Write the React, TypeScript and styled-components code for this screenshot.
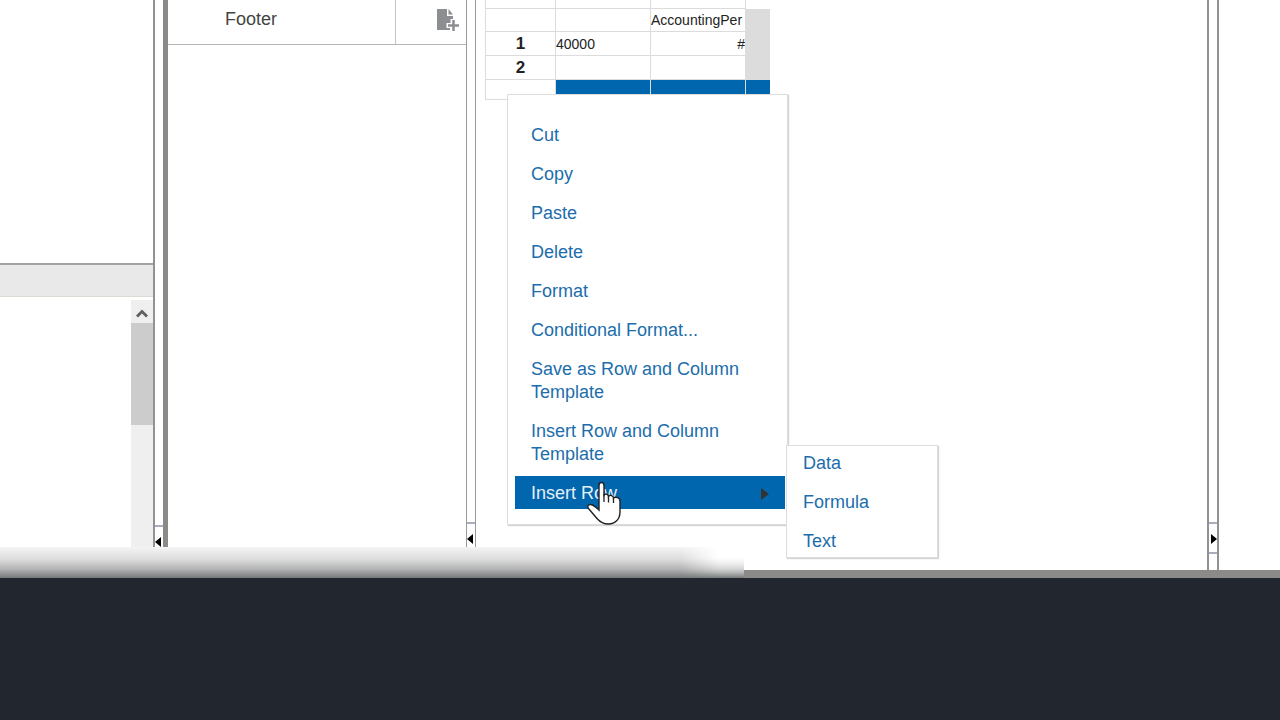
import React from "react";
import styled, { createGlobalStyle } from "styled-components";

const GlobalStyle = createGlobalStyle`
  *, *::before, *::after { box-sizing: border-box; }
  body {
    margin: 0;
    background: #ffffff;
    font-family: "Liberation Sans", Arial, sans-serif;
    font-size: 18px;
    line-height: 23px;
    color: #444444;
  }
  button { font: inherit; border: 0; background: none; padding: 0; cursor: pointer; }
`;

const Page = styled.div`
  min-height: 100vh;
  display: flex;
  flex-direction: column;
  overflow: hidden;
`;

const Workspace = styled.main`
  position: relative;
  flex: 1;
  display: flex;
  border-bottom: 8px solid #8b8a88;
`;

const Backdrop = styled.footer`
  height: 142px;
  background: #22262f;
`;

const LeftPanel = styled.aside`
  width: 155px;
  flex: none;
  display: flex;
  flex-direction: column;
  border-right: 2px solid #929292;
`;

const LeftTop = styled.div`
  height: 265px;
  border-bottom: 2px solid #a2a2a2;
`;

const LeftHeading = styled.div`
  height: 32px;
  background: #e9e9e9;
  border-bottom: 1px solid #dcdcd4;
`;

const LeftBody = styled.div`
  flex: 1;
  display: flex;
  justify-content: flex-end;
  padding-top: 3px;
`;

const Scrollbar = styled.div`
  width: 22px;
  display: flex;
  flex-direction: column;
  background: #efefef;
`;

const ScrollButton = styled.button`
  height: 23px;
  display: flex;
  align-items: center;
  justify-content: center;
  padding-top: 4px;
`;

const ScrollThumb = styled.div`
  height: 102px;
  background: #cccccc;
`;

const Splitter = styled.div<{ $edge?: number }>`
  flex: none;
  width: ${({ $edge = 0 }) => 8 + $edge}px;
  display: flex;
  flex-direction: column;
  justify-content: flex-end;
  border-right: ${({ $edge = 0 }) => $edge}px solid #8b8a86;
`;

const SplitterHandle = styled.button<{ $height: number; $closed?: boolean }>`
  height: ${({ $height }) => $height}px;
  display: flex;
  flex-direction: column;
  align-items: ${({ $closed }) => ($closed ? "flex-end" : "flex-start")};
  padding-top: 10px;
  border-top: 2px solid #a9afba;
  border-bottom: ${({ $closed }) => ($closed ? "2px solid #a9afba" : "0")};
  margin-bottom: ${({ $closed }) => ($closed ? "16px" : "0")};
`;

const Outline = styled.section`
  width: 299px;
  flex: none;
  border-right: 1px solid #999999;
`;

const OutlineRow = styled.div`
  height: 45px;
  display: flex;
  border-bottom: 1px solid #b4b4b4;
`;

const OutlineLabel = styled.div`
  flex: 1;
  padding: 8px 0 0 57px;
  border-right: 1px solid #c4c4c4;
`;

const OutlineAction = styled.button`
  width: 70px;
  display: flex;
  padding: 8px 0 0 41px;
`;

const Canvas = styled.section`
  position: relative;
  flex: 1;
  min-width: 0;
  padding-left: 9px;
  border-left: 1px solid #999999;
  border-right: 2px solid #929292;
`;

const Grid = styled.table`
  width: 285px;
  table-layout: fixed;
  border-spacing: 0;
  border-left: 1px solid #dcdcdc;
  font-size: 14px;
  line-height: 20px;
  color: #222222;
`;

const GridRow = styled.tr<{ $height: number }>`
  height: ${({ $height }) => $height}px;
`;

const Cell = styled.td<{ $fill?: string; $align?: string }>`
  padding: 0;
  overflow: hidden;
  white-space: nowrap;
  text-align: ${({ $align }) => $align ?? "left"};
  background: ${({ $fill }) => $fill ?? "transparent"};
  border-right: 1px solid #dcdcdc;
  border-bottom: 1px solid ${({ $fill }) => $fill ?? "#dcdcdc"};
`;

const RowHeading = styled.th`
  padding: 0;
  font-size: 17px;
  border-right: 1px solid #dcdcdc;
  border-bottom: 1px solid #dcdcdc;
`;

const GridTrack = styled.td<{ $fill?: string }>`
  padding: 0;
  background: ${({ $fill }) => $fill ?? "#dcdcdc"};
`;

const MenuSurface = styled.ul`
  position: absolute;
  margin: 0;
  list-style: none;
  display: flex;
  flex-direction: column;
  gap: 6px;
  background: #ffffff;
  border: 1px solid #dddddd;
  box-shadow: 1px 1px 1px #d4d4d4;
`;

const ContextMenu = styled(MenuSurface)`
  top: 94px;
  left: 31px;
  width: 281px;
  padding: 23px 2px 15px 7px;
`;

const Submenu = styled(MenuSurface)`
  top: -31px;
  left: 271px;
  width: 152px;
  padding: 0;
`;

const MenuEntry = styled.li`
  position: relative;
`;

const MenuButton = styled.button<{ $active?: boolean }>`
  width: 100%;
  display: flex;
  align-items: center;
  justify-content: space-between;
  padding: 6px 16px 4px;
  text-align: left;
  color: ${({ $active }) => ($active ? "#e4eff8" : "#1c6dab")};
  background: ${({ $active }) => ($active ? "#0066ae" : "transparent")};
`;

const Pointer = styled.svg`
  position: absolute;
  left: 71px;
  top: 5px;
  pointer-events: none;
`;

const Haze = styled.div`
  position: absolute;
  left: 0;
  top: 547px;
  bottom: -8px;
  width: 744px;
  background: linear-gradient(#f5f4f4, #dcdcdc 40%, #b2b3b3 72%, #74797a);
`;

const HazeFade = styled.div`
  margin-left: auto;
  width: 64px;
  height: 100%;
  background: linear-gradient(#ffffff 30%, rgba(255, 255, 255, 0));
  mask-image: linear-gradient(to right, transparent, #000000 60%);
`;

const RightPanel = styled.aside`
  flex: none;
  width: 63px;
  border-left: 2px solid #929292;
`;

const Arrow = ({ right = false }: { right?: boolean }) => (
  <svg width="6" height="10" viewBox="0 0 6 10" aria-hidden="true">
    <path d={right ? "M0 0L6 5L0 10Z" : "M6 0L0 5L6 10Z"} fill="#000000" />
  </svg>
);

const menuItems = [
  "Cut",
  "Copy",
  "Paste",
  "Delete",
  "Format",
  "Conditional Format...",
  "Save as Row and Column Template",
  "Insert Row and Column Template",
];

const rowTypes = ["Data", "Formula", "Text"];

export default function App() {
  return (
    <>
      <GlobalStyle />
      <Page>
        <Workspace>
          <LeftPanel>
            <LeftTop />
            <LeftHeading />
            <LeftBody>
              <Scrollbar>
                <ScrollButton aria-label="Scroll up">
                  <svg width="12" height="9" viewBox="0 0 12 9" aria-hidden="true">
                    <path d="M1 7.500L6 2.500L11 7.500" fill="none" stroke="#606060" strokeWidth="2.8" />
                  </svg>
                </ScrollButton>
                <ScrollThumb />
              </Scrollbar>
            </LeftBody>
          </LeftPanel>
          <Splitter $edge={5}>
            <SplitterHandle $height={45} aria-label="Collapse left panel">
              <Arrow />
            </SplitterHandle>
          </Splitter>
          <Outline>
            <OutlineRow>
              <OutlineLabel>Footer</OutlineLabel>
              <OutlineAction aria-label="Add footer item">
                <svg width="23" height="24" viewBox="0 0 23 24" aria-hidden="true">
                  <path
                    d="M0 1H10V8H16V11H13.500V15H9.500V20H13V22H0ZM11.500 1L16 6.500H11.500Z"
                    fill="#8d8e91"
                  />
                  <path d="M16.500 12V23M11 17.500H22" fill="none" stroke="#8d8e91" strokeWidth="2.500" />
                </svg>
              </OutlineAction>
            </OutlineRow>
          </Outline>
          <Splitter>
            <SplitterHandle $height={48} aria-label="Collapse outline">
              <Arrow />
            </SplitterHandle>
          </Splitter>
          <Canvas>
            <Grid>
              <colgroup>
                <col style={{ width: 70 }} />
                <col style={{ width: 95 }} />
                <col style={{ width: 95 }} />
                <col />
              </colgroup>
              <tbody>
                <GridRow $height={9}>
                  <RowHeading />
                  <Cell />
                  <Cell />
                  <GridTrack $fill="#ffffff" />
                </GridRow>
                <GridRow $height={23}>
                  <RowHeading />
                  <Cell />
                  <Cell>AccountingPer</Cell>
                  <GridTrack rowSpan={3} />
                </GridRow>
                <GridRow $height={24}>
                  <RowHeading scope="row">1</RowHeading>
                  <Cell>40000</Cell>
                  <Cell $align="right">#</Cell>
                </GridRow>
                <GridRow $height={24}>
                  <RowHeading scope="row">2</RowHeading>
                  <Cell />
                  <Cell />
                </GridRow>
                <GridRow $height={20}>
                  <RowHeading />
                  <Cell $fill="#0066ae" />
                  <Cell $fill="#0066ae" />
                  <GridTrack $fill="#0066ae" />
                </GridRow>
              </tbody>
            </Grid>
            <ContextMenu>
              {menuItems.map((label) => (
                <MenuEntry key={label}>
                  <MenuButton>{label}</MenuButton>
                </MenuEntry>
              ))}
              <MenuEntry>
                <MenuButton $active aria-haspopup="true" aria-expanded="true">
                  Insert Row
                  <svg width="8" height="12" viewBox="0 0 8 12" aria-hidden="true">
                    <path d="M0 0L8 6L0 12Z" fill="#333333" />
                  </svg>
                </MenuButton>
                <Submenu>
                  {rowTypes.map((label) => (
                    <MenuEntry key={label}>
                      <MenuButton>{label}</MenuButton>
                    </MenuEntry>
                  ))}
                </Submenu>
                <Pointer width="36" height="44" viewBox="0 0 36 44" aria-hidden="true">
                  <path
                    d="M13 4.500C13 .5 18 .5 18 4.500V14C19 12.500 22.500 13 22.500 15.500C24 13.500 27.500 14.500 27.500 17C29.500 15.500 34 16.500 34 20V31C34 38.500 29 43 22.500 43C17 43 14 41 11 37.500L2.500 27.500C.5 24.500 3.500 22.500 6.500 24C9.500 25.500 11.500 27.500 13 29Z"
                    fill="#ffffff"
                    stroke="#222222"
                    strokeWidth="1.400"
                  />
                  <path d="M18 13V21M22.500 15.500V21.500M27.500 17V22" stroke="#222222" strokeWidth="1.300" />
                </Pointer>
              </MenuEntry>
            </ContextMenu>
          </Canvas>
          <Splitter>
            <SplitterHandle $height={32} $closed aria-label="Expand properties panel">
              <Arrow right />
            </SplitterHandle>
          </Splitter>
          <RightPanel />
          <Haze>
            <HazeFade />
          </Haze>
        </Workspace>
        <Backdrop />
      </Page>
    </>
  );
}
